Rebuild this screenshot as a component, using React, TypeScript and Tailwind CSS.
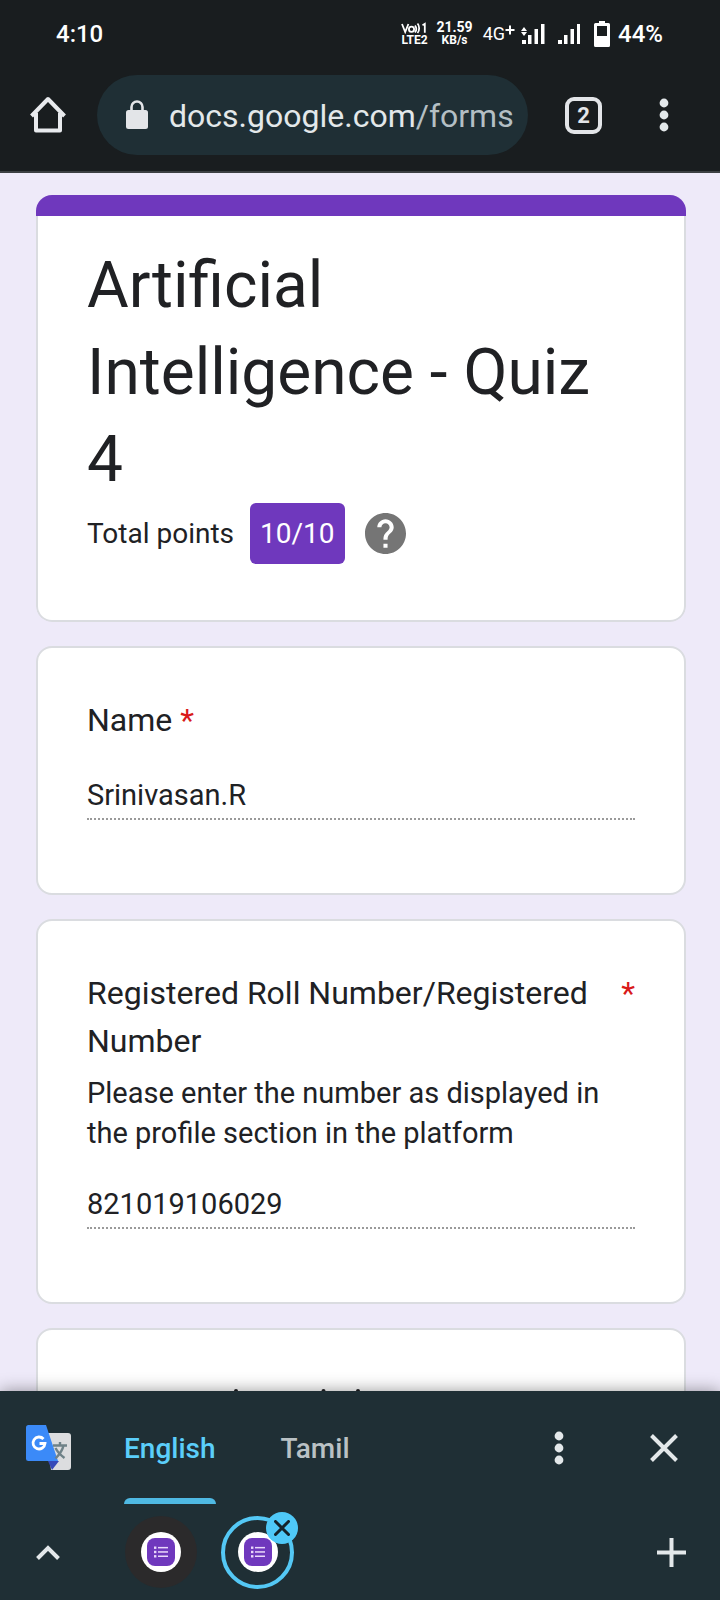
import React from "react";

function FormFavicon() {
  return (
    <span className="flex size-10 items-center justify-center rounded-full bg-white">
      <span className="flex size-7 items-center justify-center rounded-lg bg-[#6f38bd]">
        <svg viewBox="0 0 16 12" className="h-3 w-4" fill="#ead9fb" aria-hidden="true">
          <rect x="1" y="0.500" width="2.400" height="2.400" />
          <rect x="1" y="4.800" width="2.400" height="2.400" />
          <rect x="1" y="9.100" width="2.400" height="2.400" />
          <rect x="5" y="0.900" width="10" height="1.500" />
          <rect x="5" y="5.200" width="10" height="1.500" />
          <rect x="5" y="9.500" width="10" height="1.500" />
        </svg>
      </span>
    </span>
  );
}

function Dots() {
  return (
    <svg viewBox="0 0 10 34" className="h-[34px] w-[10px]" fill="#e3e8ea" aria-hidden="true">
      <circle cx="5" cy="5" r="4.400" />
      <circle cx="5" cy="17" r="4.400" />
      <circle cx="5" cy="29" r="4.400" />
    </svg>
  );
}

function StatusBar() {
  return (
    <div className="flex h-[68px] items-center pl-14 pr-[57px] text-white">
      <span className="flex-1 text-2xl font-medium">4:10</span>
      <span className="mr-2 flex flex-col text-xs font-bold leading-3">
        <svg viewBox="0 0 27 12" className="h-3 w-[27px]" fill="none" stroke="#fff" strokeWidth="1.800" role="img" aria-label="VoLTE">
          <path d="M1 2l3.200 8L7.400 2" />
          <circle cx="10.500" cy="7.200" r="2.600" />
          <path d="M14 3.500c1.500 2 1.500 5 0 7M16.500 1.500c2.200 2.500 2.200 7 0 9.500" />
          <path d="M21.500 3.200l2.300-1.400v9" />
        </svg>
        <span>LTE2</span>
      </span>
      <span className="mr-[10px] flex flex-col items-center text-sm font-bold leading-[13px]">
        <span>21.59</span>
        <span className="text-xs leading-[13px]">KB/s</span>
      </span>
      <span className="text-lg leading-6">4G</span>
      <svg viewBox="0 0 10 24" className="mr-[6px] h-6 w-[10px]" stroke="#fff" strokeWidth="2" aria-hidden="true">
        <path d="M0.500 8h9M5 3.500v9" />
      </svg>
      <svg viewBox="0 0 24 22" className="mr-3 h-[22px] w-6" fill="#fff" aria-hidden="true">
        <path d="M3 4l3 4H0zM3 13l-3-4h6zM1 17h4v4H1zM7 12h3.500v9H7zM13.500 6H17v15h-3.500zM20 1h3.500v20H20z" />
      </svg>
      <svg viewBox="0 0 24 22" className="mr-3 h-[22px] w-6" fill="#fff" aria-hidden="true">
        <path d="M1 17h4v4H1zM7 12h3.500v9H7zM13.500 6H17v15h-3.500zM20 1h3v20h-3z" />
      </svg>
      <svg viewBox="0 0 18 28" className="mr-[7px] h-7 w-[18px]" aria-hidden="true">
        <path fill="#fff" fillRule="evenodd" d="M6 1h6v2h3.500Q17 3 17 4.500v21q0 1.500-1.500 1.500h-13Q1 27 1 25.500v-21Q1 3 2.500 3H6zM4 6v10h10V6z" />
      </svg>
      <span className="text-2xl font-medium">44%</span>
    </div>
  );
}

function BrowserBar() {
  return (
    <div className="flex h-[103px] items-start pl-[29px] pt-[7px]">
      <button aria-label="Home" className="mr-[30px] flex h-20 items-center">
        <svg viewBox="0 0 38 38" className="size-[38px]" fill="none" stroke="#e8eaed" strokeWidth="4" strokeLinejoin="round" aria-hidden="true">
          <path d="M2.500 20L19 3l16.500 17" />
          <path d="M7 17v17.500h24V17" />
        </svg>
      </button>
      <div className="flex h-20 flex-1 items-center rounded-full bg-[#1f2f35] pl-[29px]">
        <svg viewBox="0 0 22 30" className="mr-[21px] h-[30px] w-[22px] shrink-0" aria-hidden="true">
          <rect y="10" width="22" height="19" rx="2.500" fill="#e3e5e8" />
          <path d="M5.500 11V7a5.500 5.500 0 0 1 11 0v4" fill="none" stroke="#e3e5e8" strokeWidth="2.600" />
        </svg>
        <a href="#form" className="whitespace-nowrap pt-0.5 text-[32px] text-[#e3e8ea]">
          docs.google.com<span className="text-[#b4bfc4]">/forms</span>
        </a>
      </div>
      <button aria-label="Tabs" className="ml-[37px] flex h-20 items-center">
        <span className="flex size-[37px] items-center justify-center rounded-[9px] border-4 border-[#e3e5e8] text-[22px] font-bold text-[#e3e5e8]">2</span>
      </button>
      <button aria-label="More options" className="ml-[57px] mr-[51px] flex h-20 items-center">
        <Dots />
      </button>
    </div>
  );
}

function Card({ children }: { children?: React.ReactNode }) {
  return <section className="shrink-0 rounded-2xl border-2 border-[#dadce0] bg-white px-[49px] pb-[73px] pt-12">{children}</section>;
}

function Answer({ id, value }: { id: string; value: string }) {
  return (
    <input
      id={id}
      readOnly
      defaultValue={value}
      className="block h-12 w-full border-b-2 border-dotted border-[#9a9a9a] bg-transparent text-[29px] text-[#202124] outline-none"
    />
  );
}

function Form() {
  return (
    <main id="form" className="flex min-h-0 flex-1 flex-col gap-6 overflow-hidden bg-[#eeeaf9] pl-9 pr-[34px] pt-[22px] text-[#202124]">
      <section className="shrink-0 overflow-hidden rounded-2xl">
        <div className="h-[21px] bg-[#6f38bd]" />
        <div className="rounded-b-2xl border-2 border-t-0 border-[#dadce0] bg-white px-[49px] pb-14 pt-[26px]">
          <h1 className="text-[64px] leading-[87px]">Artificial Intelligence - Quiz 4</h1>
          <div className="flex items-center">
            <span className="mr-4 text-[28px]">Total points</span>
            <span className="mr-5 flex h-[61px] items-center justify-center rounded-md bg-[#6f38bd] px-[10px] text-[28px] text-white">10/10</span>
            <button aria-label="Help">
              <svg viewBox="2 2 20 20" className="size-[41px]" aria-hidden="true">
                <path fill="#757575" d="M12 2C6.480 2 2 6.480 2 12s4.480 10 10 10 10-4.480 10-10S17.520 2 12 2zm1 17h-2v-2h2v2zm2.070-7.750l-.9.920C13.450 12.900 13 13.500 13 15h-2v-.5c0-1.100.45-2.100 1.170-2.830l1.240-1.260c.37-.36.59-.86.59-1.410 0-1.100-.9-2-2-2s-2 .9-2 2H8c0-2.210 1.790-4 4-4s4 1.790 4 4c0 .88-.36 1.680-.93 2.250z" />
              </svg>
            </button>
          </div>
        </div>
      </section>
      <Card>
        <label htmlFor="name" className="block text-[32px] leading-[48px]">
          Name <span className="text-[#d91a1a]">*</span>
        </label>
        <div className="pt-7"><Answer id="name" value="Srinivasan.R" /></div>
      </Card>
      <Card>
        <label htmlFor="roll" className="flex justify-between text-[32px] leading-[48px]">
          <span>Registered Roll Number/Registered Number</span>
          <span className="text-[#d91a1a]">*</span>
        </label>
        <p className="pt-2 text-[29px] leading-10">Please enter the number as displayed in the profile section in the platform</p>
        <div className="pt-7"><Answer id="roll" value="821019106029" /></div>
      </Card>
      <Card>
        <svg viewBox="0 0 300 24" className="mt-[11px] h-6 w-[300px]" fill="#202124" aria-hidden="true">
          <circle cx="149" cy="2" r="2" />
          <circle cx="236.500" cy="2" r="2" />
          <circle cx="271" cy="2" r="2" />
        </svg>
      </Card>
    </main>
  );
}

function TranslateBar() {
  return (
    <div className="flex h-[113px] items-center pl-[26px] pr-[42px]">
      <svg viewBox="0 0 45 45" className="size-[45px]" aria-hidden="true">
        <path d="M20 8h22q3 0 3 3v31q0 3-3 3H25z" fill="#dcdddf" />
        <path d="M22 36h11l-7 9z" fill="#3549b8" />
        <path d="M2.500 0H20l12 36H2.500Q0 36 0 33.500v-31Q0 0 2.500 0z" fill="#3b8af8" />
        <path d="M27 20.500h14M34 17v3M37.500 20.500c-1 5-4 9-8 13M29.500 23c2 4 5 7 9 10" fill="none" stroke="#6f8288" strokeWidth="2.400" />
        <path d="M17.500 14a6 6 0 1 0 1.500 4.500H13.500" fill="none" stroke="#fff" strokeWidth="2.800" />
      </svg>
      <div role="tablist" className="flex flex-1 self-stretch pl-[53px] text-[28px] font-medium">
        <button role="tab" aria-selected="true" className="flex flex-col text-[#5bcefa]">
          <span className="flex flex-1 items-center pt-2">English</span>
          <span className="h-[6px] self-stretch rounded-t-md bg-[#4fb9e3]" />
        </button>
        <button role="tab" aria-selected="false" className="ml-[65px] flex flex-col pb-[6px] text-[#b9c1c4]">
          <span className="flex flex-1 items-center pt-2">Tamil</span>
        </button>
      </div>
      <button aria-label="Translate options" className="mr-[86px]"><Dots /></button>
      <button aria-label="Close translation">
        <svg viewBox="0 0 28 28" className="size-7" stroke="#e3e8ea" strokeWidth="4" aria-hidden="true"><path d="M1.500 1.500l25 25M26.500 1.500l-25 25" /></svg>
      </button>
    </div>
  );
}

function TabStrip() {
  return (
    <div className="flex h-24 items-center pl-9 pr-[34px]">
      <button aria-label="Expand" className="mr-[65px]">
        <svg viewBox="0 0 24 16" className="h-4 w-6" fill="none" stroke="#e3e8ea" strokeWidth="4" aria-hidden="true"><path d="M1.500 14.500L12 4l10.500 10.500" /></svg>
      </button>
      <button aria-label="Form tab" className="mr-6 flex size-[72px] items-center justify-center rounded-full bg-[#2b2a2b]"><FormFavicon /></button>
      <div className="relative">
        <button aria-label="Current form tab" className="flex size-[73px] items-center justify-center rounded-full border-4 border-[#54c8f5]"><FormFavicon /></button>
        <button aria-label="Close tab" className="absolute -right-1 -top-1 flex size-8 items-center justify-center rounded-full bg-[#4fc9f8]">
          <svg viewBox="0 0 16 16" className="size-4" stroke="#15232a" strokeWidth="3" strokeLinecap="round" aria-hidden="true"><path d="M1.500 1.500l13 13M14.500 1.500l-13 13" /></svg>
        </button>
      </div>
      <span className="flex-1" />
      <button aria-label="New tab">
        <svg viewBox="0 0 29 29" className="size-[29px]" stroke="#e3e8ea" strokeWidth="4" aria-hidden="true"><path d="M0 14.500h29M14.500 0v29" /></svg>
      </button>
    </div>
  );
}

export default function App() {
  return (
    <div className="flex h-screen flex-col overflow-hidden bg-[#1f2f35] font-[Roboto,sans-serif]">
      <header className="border-b-2 border-[#3c4043] bg-[#191d1f]">
        <StatusBar />
        <BrowserBar />
      </header>
      <Form />
      <footer className="relative bg-[#1f2f35] shadow-[0_0_16px_rgba(0,0,0,0.4)]">
        <TranslateBar />
        <TabStrip />
      </footer>
    </div>
  );
}
